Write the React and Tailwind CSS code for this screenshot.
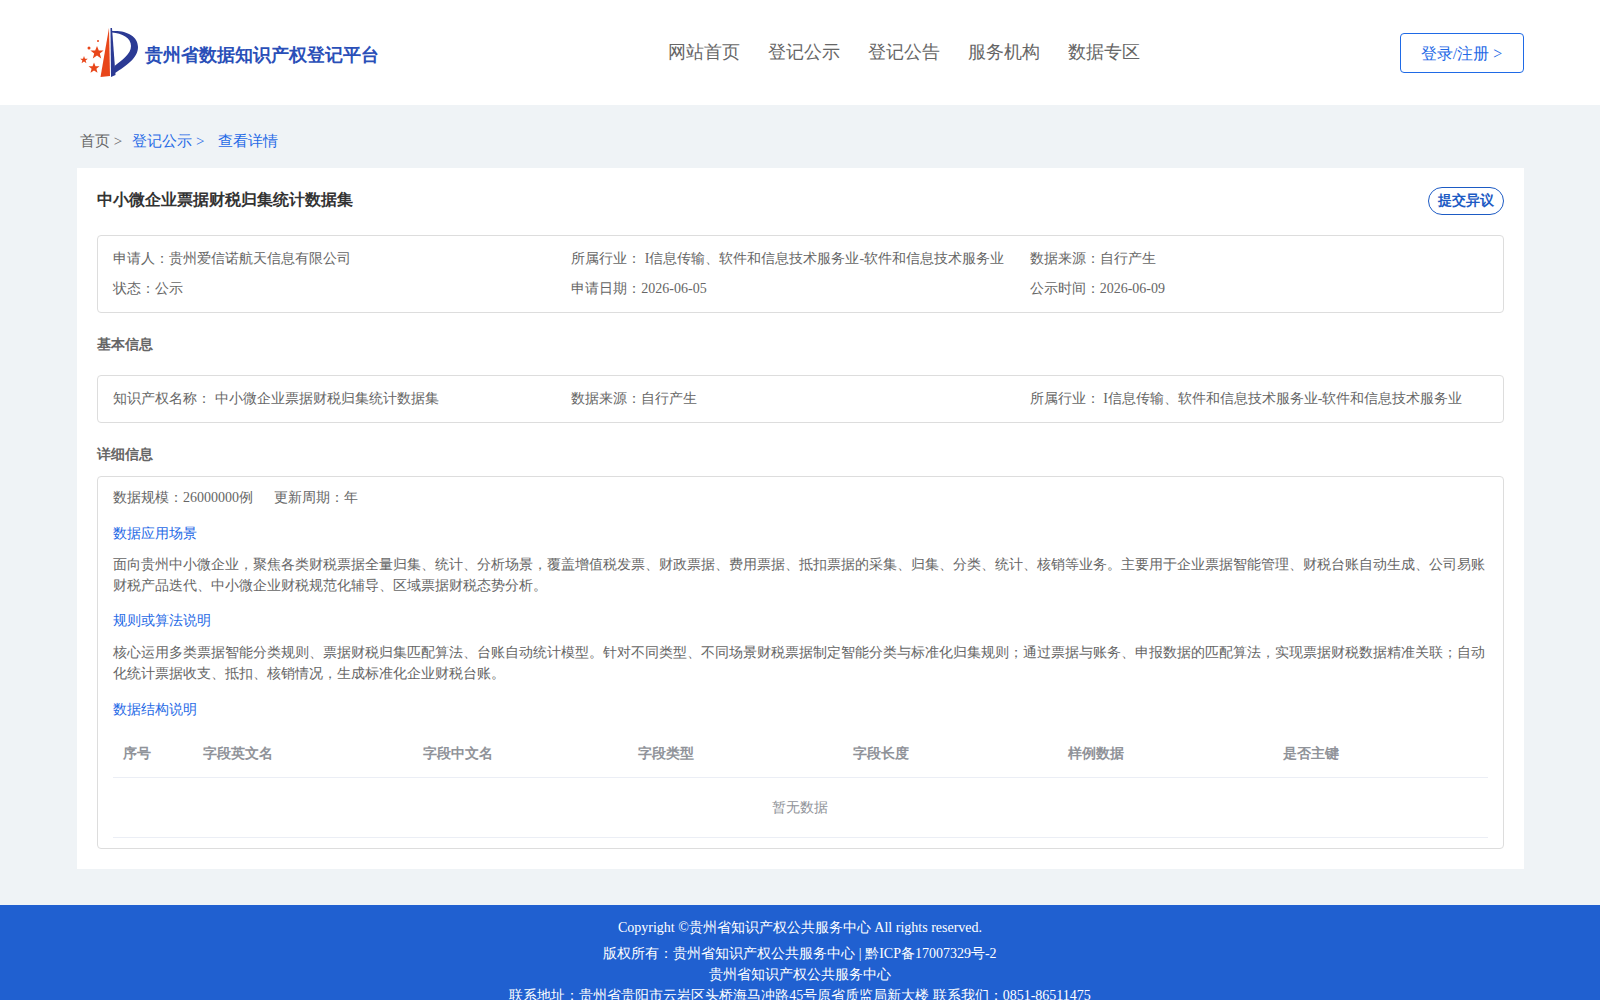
const navItems = ['网站首页', '登记公示', '登记公告', '服务机构', '数据专区'];
const columns = [
  { name: '序号', width: 'w-[79.5px]' },
  { name: '字段英文名', width: 'w-[220px]' },
  { name: '字段中文名', width: 'w-[215px]' },
  { name: '字段类型', width: 'w-[215px]' },
  { name: '字段长度', width: 'w-[215px]' },
  { name: '样例数据', width: 'w-[215px]' },
  { name: '是否主键', width: 'flex-1' },
];

function Logo() {
  return (
    <svg width="58" height="50" viewBox="80 28 58 50" className="shrink-0 mb-[2px]">
      <path d="M109 28 L100.5 77 L110 76 Z" fill="#e8461a" />
      <path d="M110.5 28 L111 77 L115.5 75 L112 28 Z" fill="#2b3a94" />
      <path d="M112 31 C126 30 138 36 138 47 C138 58 126 66 115 73 L114.5 66 C122 60 131 54 131 46 C131 38 122 33 112 32.5 Z" fill="#2b3a94" />
      <polygon points="97,46 98.8,50.6 103.6,50.6 99.8,53.6 101.2,58.4 97,55.6 92.8,58.4 94.2,53.6 90.4,50.6 95.2,50.6" fill="#e8461a" />
      <polygon points="94,62.5 95.5,66.2 99.5,66.2 96.4,68.8 97.5,72.8 94,70.5 90.5,72.8 91.6,68.8 88.5,66.2 92.5,66.2" fill="#e8461a" />
      <polygon points="84,56 85,58.7 87.8,58.7 85.6,60.4 86.4,63.2 84,61.6 81.6,63.2 82.4,60.4 80.2,58.7 83,58.7" fill="#e8461a" />
      <circle cx="89" cy="48" r="1.5" fill="#e8461a" />
      <circle cx="98" cy="41" r="1" fill="#e8461a" />
    </svg>
  );
}

function InfoRow({ items }) {
  return (
    <div className="grid grid-cols-3 text-sm leading-[30px] text-[#666]">
      {items.map((item) => (
        <div key={item}>{item}</div>
      ))}
    </div>
  );
}

export default function App() {
  return (
    <div className='h-[1000px] overflow-hidden bg-[#eff3f6] font-["Liberation_Serif",serif]'>
      <header className="h-[105px] bg-white flex items-center pl-[80px] pr-[76px]">
        <div className="flex items-center gap-[6.5px] w-[588px] pt-[2px]">
          <Logo />
          <span className="pt-[2px] text-lg font-bold text-[#2a4fb8]">贵州省数据知识产权登记平台</span>
        </div>
        <nav className="flex gap-7 text-lg text-[#666] mb-[2px]">
          {navItems.map((item) => (
            <span key={item}>{item}</span>
          ))}
        </nav>
        <button className="ml-auto w-[124px] h-10 pt-[2px] pr-[1px] border border-[#1f6ae6] rounded text-base text-[#1f6ae6]">登录/注册 &gt;</button>
      </header>

      <div className="flex items-center h-[63px] pt-[10px] pl-[80px] text-[15px] text-[#666]">
        <span>首页 &gt;</span>
        <span className="ml-[10px] text-[#1f6ae6]">登记公示 &gt;</span>
        <span className="ml-[14px] text-[#1f6ae6]">查看详情</span>
      </div>

      <main className="ml-[77px] mr-[76px] bg-white h-[701px] px-5 pt-[19px]">
        <div className="flex items-start justify-between h-[48px]">
          <h1 className="pt-[1px] text-base font-bold text-[#333] leading-6">中小微企业票据财税归集统计数据集</h1>
          <button className="h-[28px] px-[9px] border border-[#1d5bc4] rounded-[14px] text-sm font-bold text-[#1d5bc4]">提交异议</button>
        </div>

        <section className="h-[78px] border border-[#ddd] rounded px-[15px] py-2">
          <InfoRow items={['申请人：贵州爱信诺航天信息有限公司', '所属行业： I信息传输、软件和信息技术服务业-软件和信息技术服务业', '数据来源：自行产生']} />
          <InfoRow items={['状态：公示', '申请日期：2026-06-05', '公示时间：2026-06-09']} />
        </section>

        <h2 className="mt-[22px] mb-[20px] text-sm font-bold leading-5 text-[#666]">基本信息</h2>

        <section className="h-12 border border-[#ddd] rounded px-[15px] py-2">
          <InfoRow items={['知识产权名称： 中小微企业票据财税归集统计数据集', '数据来源：自行产生', '所属行业： I信息传输、软件和信息技术服务业-软件和信息技术服务业']} />
        </section>

        <h2 className="mt-[22px] mb-[11px] text-sm font-bold leading-5 text-[#666]">详细信息</h2>

        <section className="h-[373px] border border-[#ddd] rounded px-[15px] text-sm text-[#666]">
          <div className="flex gap-[21px] leading-[42px] h-[42px]">
            <span>数据规模：26000000例</span>
            <span>更新周期：年</span>
          </div>
          <div className="text-[#1f6ae6] leading-[30px]">数据应用场景</div>
          <p className="mt-[5px] leading-[21px]">面向贵州中小微企业，聚焦各类财税票据全量归集、统计、分析场景，覆盖增值税发票、财政票据、费用票据、抵扣票据的采集、归集、分类、统计、核销等业务。主要用于企业票据智能管理、财税台账自动生成、公司易账财税产品迭代、中小微企业财税规范化辅导、区域票据财税态势分析。</p>
          <div className="mt-[10px] text-[#1f6ae6] leading-[30px]">规则或算法说明</div>
          <p className="mt-[6px] leading-[21px]">核心运用多类票据智能分类规则、票据财税归集匹配算法、台账自动统计模型。针对不同类型、不同场景财税票据制定智能分类与标准化归集规则；通过票据与账务、申报数据的匹配算法，实现票据财税数据精准关联；自动化统计票据收支、抵扣、核销情况，生成标准化企业财税台账。</p>
          <div className="mt-[11px] text-[#1f6ae6] leading-[30px]">数据结构说明</div>
          <div className="mt-[4px]">
            <div className="flex h-[49px] pt-[1px] items-center border-b border-[#ebeef5] font-bold text-[#909399]">
              {columns.map((col) => (
                <div key={col.name} className={`${col.width} px-[10px]`}>{col.name}</div>
              ))}
            </div>
            <div className="flex h-[60px] pr-[2px] items-center justify-center border-b border-[#ebeef5] text-[#909399]">暂无数据</div>
          </div>
        </section>
      </main>

      <footer className="mt-9 bg-[#2060d0] text-white text-sm text-center pt-[11px]">
        <div className="leading-[24px] mb-[3px]">Copyright ©贵州省知识产权公共服务中心 All rights reserved.</div>
        <div className="leading-[21px]">版权所有：贵州省知识产权公共服务中心 | 黔ICP备17007329号-2</div>
        <div className="leading-[21px]">贵州省知识产权公共服务中心</div>
        <div className="leading-[21px]">联系地址：贵州省贵阳市云岩区头桥海马冲路45号原省质监局新大楼 联系我们：0851-86511475</div>
      </footer>
    </div>
  );
}
